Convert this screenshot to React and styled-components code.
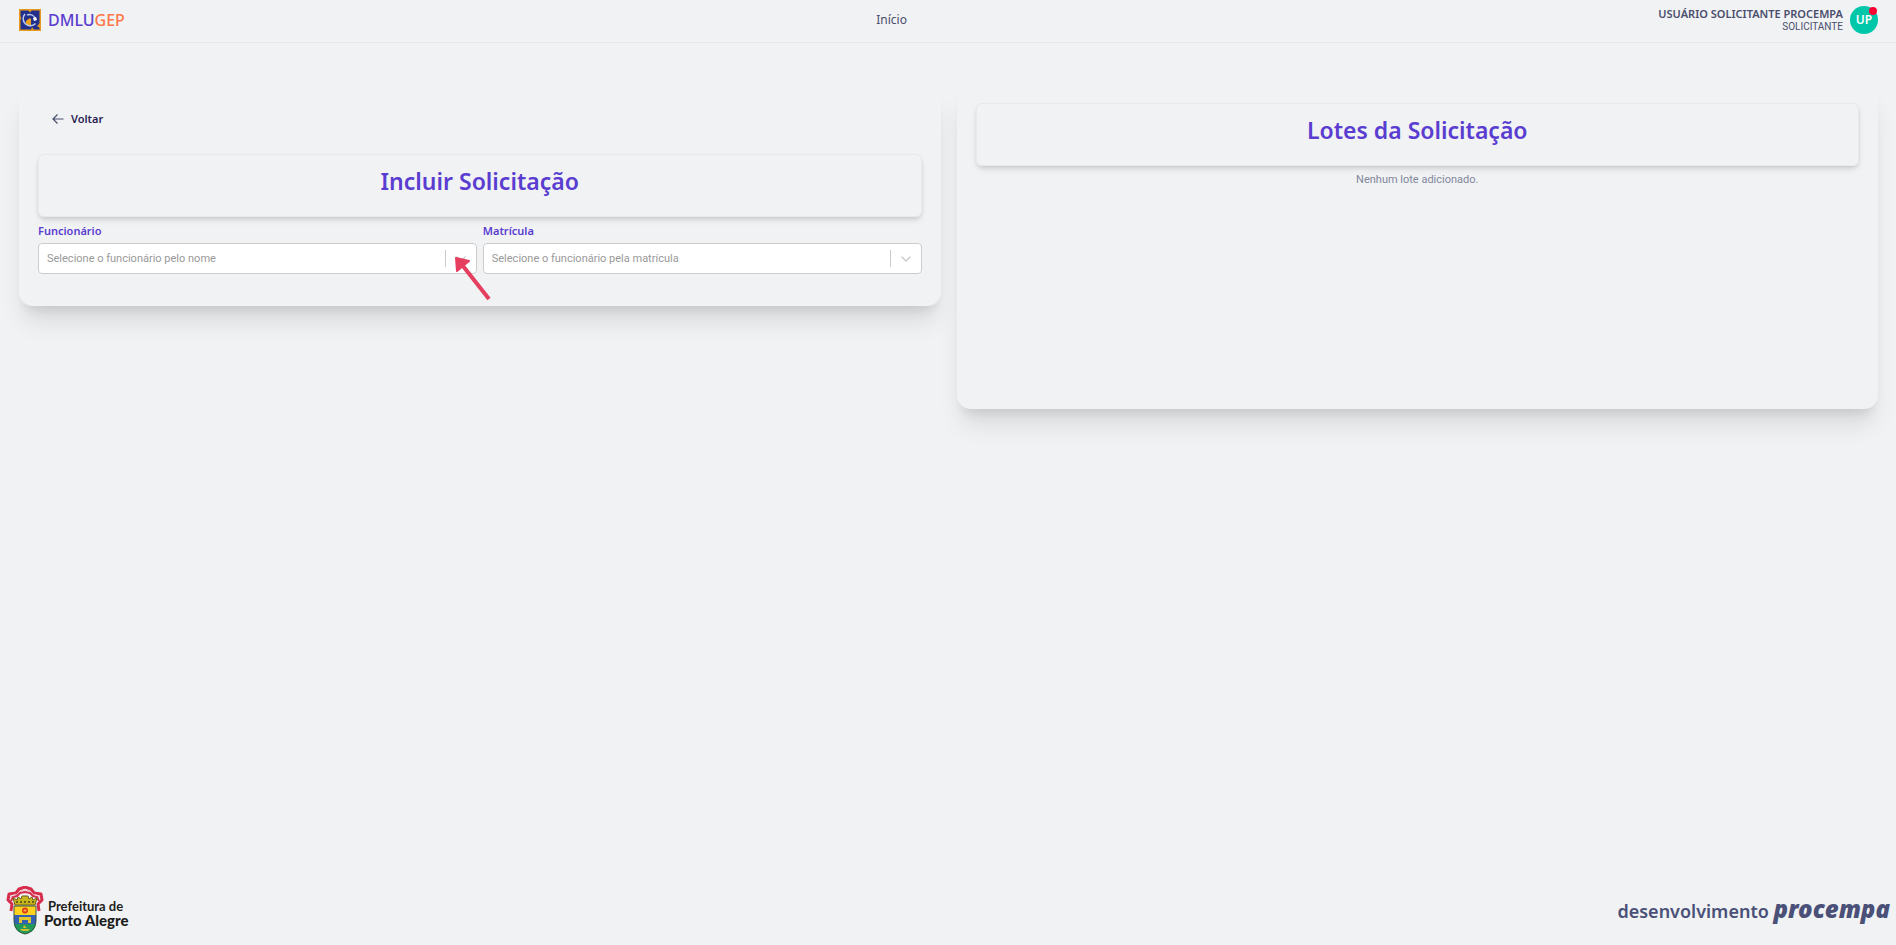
import React from 'react'
import styled, {createGlobalStyle} from 'styled-components'

const GlobalStyle = createGlobalStyle`
  * { box-sizing: border-box; }
  body {
    margin: 0;
    background: #f0f2f4;
    color: #4a4e6d;
    font-family: "Noto Sans", "Open Sans", sans-serif;
    font-size: 11px;
  }
`

const CityLogo = () => (
  <svg width="22" height="22" viewBox="0 0 22 22" aria-hidden="true">
    <rect width="22" height="22" fill="#e59a1c"/>
    <rect x="1.5" y="1.5" width="19" height="19" fill="#22308c"/>
    <path d="M9 1h4l-2 2.500zM1 7l1.500 2L1 11zM21 14l-3 3 3 2zM12 21l1-3 2 3z" fill="#e59a1c"/>
    <path d="M7 12l3-2.500h2V16H7z" fill="#f0a11d"/>
    <path d="M6 5A7 7 0 1 0 16.500 14.500" fill="none" stroke="#b9c8ea" strokeWidth="1.600"/>
    <path d="M8 6a6 6 0 0 1 8 3" fill="none" stroke="#b9c8ea" strokeWidth="1.400"/>
    <path d="M14 9l3-1 1 3-3 1z" fill="#fff"/>
  </svg>
)

const CoatOfArms = () => (
  <svg width="38" height="50" viewBox="0 0 38 50" aria-hidden="true">
    <path d="M5 25l1-7-4-4 1-6 7-1 3-4 6-2 6 2 3 4 7 1 1 6-4 4 1 7" fill="none" stroke="#d62d4c" strokeWidth="3" strokeLinejoin="round"/>
    <path d="M5 15l2-4 4-1 3-3 5-1 5 1 3 3 4 1 2 4" fill="none" stroke="#d62d4c" strokeWidth="2"/>
    <path d="M4 12l3-3 4-1 3-3 5-1 5 1 3 3 4 1 3 3" fill="none" stroke="#f0a9b6" strokeDasharray="3 1"/>
    <path d="M9 19L7 12l4 2 1-3 3 2 1-3h6l1 3 3-2 1 3 4-2-2 7z" fill="#c9b51d" stroke="#6b611a"/>
    <path d="M10 16h18" stroke="#4b4614" strokeWidth="1.500" strokeDasharray="2 2"/>
    <path d="M8 20h22v14c0 8-5 13-11 14C13 47 8 42 8 34z" fill="#ffd21f"/>
    <path d="M8 29h22v9H8z" fill="#3461b4"/>
    <path d="M8 38h22c-1 6-5 9-11 10-6-1-10-4-11-10z" fill="#20995b"/>
    <path d="M13 37v-6h12v6h-3v-3h-6v3z" fill="#e3c52c"/>
    <circle cx="19" cy="24.500" r="3" fill="#dd3b20"/>
    <path d="M19 23v3M17.500 24.500h3" stroke="#ffb02a"/>
    <path d="M14 43h10l-2 2h-6zM18 39l3 3h-4z" fill="#d0bd30"/>
    <path d="M8 20h22v14c0 8-5 13-11 14C13 47 8 42 8 34z" fill="none" stroke="#37543e"/>
  </svg>
)

const SelectField = ({id, label, placeholder, children}) => (
  <Field>
    <FieldLabel htmlFor={id}>{label}</FieldLabel>
    <SelectBox>
      <Select id={id} defaultValue="">
        <option value="">{placeholder}</option>
      </Select>
      <Indicator>
        <svg width="12" height="12" viewBox="0 0 12 12" aria-hidden="true">
          <path d="M2 4l4 4 4-4" fill="none" stroke="#ccc" strokeWidth="1.500" strokeLinecap="round"/>
        </svg>
      </Indicator>
      {children}
    </SelectBox>
  </Field>
)

const App = () => {
  return (
    <Page>
      <GlobalStyle/>
      <Header>
        <Brand href="#">
          <CityLogo/>
          <span>DMLU<b>GEP</b></span>
        </Brand>
        <NavLink href="#">Início</NavLink>
        <User>
          <UserText>
            <UserName>USUÁRIO SOLICITANTE PROCEMPA</UserName>
            <UserRole>SOLICITANTE</UserRole>
          </UserText>
          <Avatar>UP<Badge/></Avatar>
        </User>
      </Header>
      <Main>
        <Card>
          <BackButton type="button">
            <svg width="12" height="12" viewBox="0 0 12 12" aria-hidden="true">
              <path d="M11.500 6H1M5.500 1.500L1 6l4.500 4.500" fill="none" stroke="#4a4e6d" strokeWidth="1.200"/>
            </svg>
            Voltar
          </BackButton>
          <TitleBox><h1>Incluir Solicitação</h1></TitleBox>
          <Fields>
            <SelectField id="funcionario" label="Funcionário" placeholder="Selecione o funcionário pelo nome">
              <Pointer width="38" height="44" viewBox="0 0 38 44" aria-hidden="true">
                <path d="M9 9l26 33" stroke="#e63e5f" strokeWidth="4"/>
                <path d="M2 1l13 3-12 10z" fill="#e63e5f" stroke="#e63e5f" strokeWidth="2" strokeLinejoin="round"/>
              </Pointer>
            </SelectField>
            <SelectField id="matricula" label="Matrícula" placeholder="Selecione o funcionário pela matrícula"/>
          </Fields>
        </Card>
        <Card $minHeight="325px">
          <TitleBox><h1>Lotes da Solicitação</h1></TitleBox>
          <Empty>Nenhum lote adicionado.</Empty>
        </Card>
      </Main>
      <Footer>
        <CityHall>
          <CoatOfArms/>
          <CityHallText>
            <span>Prefeitura de</span>
            <strong>Porto Alegre</strong>
          </CityHallText>
        </CityHall>
        <Developer>desenvolvimento <em>procempa</em></Developer>
      </Footer>
    </Page>
  )
}

export default App


const Page = styled.div`
  min-height: 100vh;
  display: flex;
  flex-direction: column;
`

const Header = styled.header`
  display: flex;
  align-items: center;
  justify-content: space-between;
  height: 43px;
  padding: 0 18px 3px 19px;
  border-bottom: 1px solid #e5e7ea;
`

const Brand = styled.a`
  display: flex;
  align-items: center;
  gap: 7px;
  color: #5a3dd0;
  font-size: 16px;
  font-weight: 500;
  line-height: 22px;
  text-decoration: none;
  b {
    color: #ff7849;
    font-weight: 500;
  }
`

const NavLink = styled.a`
  color: #4a4e6d;
  font-size: 12px;
  text-decoration: none;
`

const User = styled.div`
  display: flex;
  align-items: center;
  gap: 7px;
`

const UserText = styled.div`
  text-align: right;
  line-height: 13px;
`

const UserName = styled.div`
  font-size: 11px;
  font-weight: 600;
`

const UserRole = styled.div`
  font-family: Roboto, sans-serif;
  font-size: 10px;
`

const Avatar = styled.div`
  position: relative;
  width: 28px;
  height: 28px;
  border-radius: 50%;
  background: #00c7a9;
  color: #fff;
  font-size: 12px;
  font-weight: 600;
  line-height: 27px;
  text-align: center;
`

const Badge = styled.span`
  position: absolute;
  top: 1px;
  right: 1px;
  width: 8px;
  height: 8px;
  border-radius: 50%;
  background: #ff0033;
`

const Main = styled.main`
  flex: 1;
  display: grid;
  grid-template-columns: 1fr 1fr;
  align-items: start;
  gap: 16px;
  padding: 41px 18px 41px 19px;
`

const Card = styled.section`
  min-height: ${props => props.$minHeight || 'auto'};
  padding: 19px 19px 32px;
  border-radius: 14px;
  box-shadow: 0 20px 25px -5px rgba(0, 0, 0, 0.1), 0 10px 10px -5px rgba(0, 0, 0, 0.08);
`

const BackButton = styled.button`
  display: flex;
  align-items: center;
  gap: 7px;
  height: 31px;
  margin-bottom: 20px;
  padding: 0 14px;
  border: none;
  background: none;
  color: #2b1d52;
  font: 600 11px "Noto Sans", sans-serif;
  cursor: pointer;
`

const TitleBox = styled.div`
  height: 63px;
  border: 1px solid #e7e9eb;
  border-radius: 6px;
  box-shadow: 0 4px 6px -1px rgba(0, 0, 0, 0.1), 0 2px 4px -1px rgba(0, 0, 0, 0.1);
  text-align: center;
  h1 {
    margin: 0;
    padding-top: 9px;
    color: #5a3dd0;
    font-size: 23px;
    font-weight: 600;
    line-height: 34px;
  }
`

const Fields = styled.div`
  display: grid;
  grid-template-columns: 1fr 1fr;
  gap: 6px;
  padding-top: 6px;
`

const Field = styled.div`
  display: flex;
  flex-direction: column;
  gap: 4px;
`

const FieldLabel = styled.label`
  color: #5a3dd0;
  font-size: 11px;
  font-weight: 600;
  line-height: 16px;
`

const SelectBox = styled.div`
  position: relative;
  display: flex;
  height: 31px;
  padding: 6px 0;
  border: 1px solid #ccc;
  border-radius: 4px;
  background: #fff;
`

const Select = styled.select`
  flex: 1;
  appearance: none;
  padding: 0 8px;
  border: none;
  outline: none;
  background: transparent;
  color: #999;
  font: 11px Roboto, sans-serif;
`

const Indicator = styled.span`
  display: flex;
  align-items: center;
  padding: 0 9px;
  border-left: 1px solid #ccc;
  pointer-events: none;
`

const Pointer = styled.svg`
  position: absolute;
  top: 13px;
  right: -16px;
  z-index: 1;
  pointer-events: none;
`

const Empty = styled.p`
  margin: 6px 0 0;
  color: #82869c;
  font-family: Roboto, sans-serif;
  font-size: 11px;
  line-height: 16px;
  text-align: center;
`

const Footer = styled.footer`
  display: flex;
  align-items: center;
  justify-content: space-between;
  padding: 0 6px 9px;
`

const CityHall = styled.div`
  display: flex;
  align-items: center;
`

const CityHallText = styled.div`
  display: flex;
  flex-direction: column;
  padding-top: 4px;
  color: #1d1d1b;
  font-family: Lato, sans-serif;
  font-size: 13px;
  font-weight: 700;
  line-height: 14px;
  span {
    padding-left: 4px;
  }
  strong {
    font-size: 15px;
    font-weight: 900;
  }
`

const Developer = styled.div`
  padding-bottom: 5px;
  color: #4a5078;
  font-size: 18px;
  font-weight: 600;
  em {
    font-size: 24px;
    font-weight: 900;
  }
`
